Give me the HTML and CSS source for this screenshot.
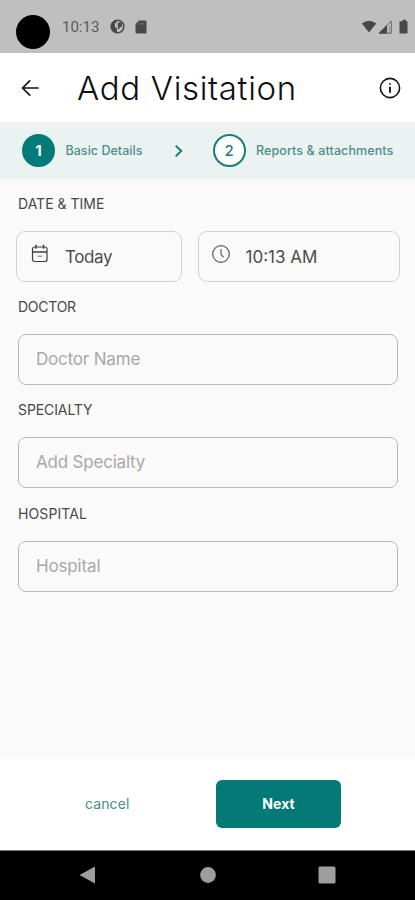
FILE: index.html
```html
<!DOCTYPE html>
<html lang="en">
<head>
<meta charset="utf-8">
<meta name="viewport" content="width=device-width, initial-scale=1">
<title>Add Visitation</title>
<link rel="stylesheet" href="styles.css">
</head>
<body>
<div class="screen">
  <div class="status">
    <span class="camera"></span>
    <span class="clock">10:13</span>
    <svg class="status-globe" width="15" height="15" viewBox="0 0 15 15"><circle cx="7.500" cy="7.500" r="6.300" fill="none" stroke="#484848" stroke-width="1.600"/><path d="M1 7.500A6.500 6.500 0 0 1 6.500 1v3H5v4l2 1.500V14A6.500 6.500 0 0 1 1 7.500zM7.800 3.500h4v4.500H9.500V10H7.800z" fill="#484848"/></svg>
    <svg class="status-card" width="12" height="14" viewBox="0 0 12 14"><path d="M4 .5h6.500q1 0 1 1v11q0 1-1 1h-9q-1 0-1-1V4z" fill="#484848"/><path d="M4 2.500v2.500M6.300 2.500v2.500M8.600 2.500v2.500" stroke="#777" stroke-width=".9"/></svg>
    <svg class="status-right" width="48" height="16" viewBox="0 0 48 16"><path d="M.8 4.500Q8 -1 15.300 4.500L8 13.600z" fill="#484848"/><path d="M18 14.200L30.300 2v12.200z" fill="none" stroke="#666" stroke-width="1"/><path d="M17.500 14.500l8.500-8.500v8.500z" fill="#484848"/><path d="M28.300 7v4.500M28.300 12.500v1.500" stroke="#777" stroke-width=".8"/><path d="M39.500 2.200h2V.8h3.500v1.400h1.500v12.300h-8V2.200z" fill="#484848"/></svg>
  </div>

  <header class="header">
    <svg class="back" width="20" height="20" viewBox="0 0 20 20" fill="none" stroke="#111" stroke-width="1.700" stroke-linecap="round" stroke-linejoin="round"><path d="M18 10H2.500M9.700 2.800L2.500 10l7.200 7.200"/></svg>
    <h1>Add Visitation</h1>
    <svg class="info" width="22" height="22" viewBox="0 0 22 22"><circle cx="11" cy="11" r="9.600" fill="none" stroke="#161616" stroke-width="1.600"/><path d="M11 9.700v6" stroke="#111" stroke-width="1.900"/><circle cx="11" cy="6.900" r="1" fill="#333"/></svg>
  </header>

  <nav class="steps">
    <span class="num num-active">1</span>
    <span class="step-label first">Basic Details</span>
    <svg class="chevron" width="10" height="14" viewBox="0 0 10 14" fill="none" stroke="#157f7b" stroke-width="1.900"><path d="M1.700 1.700L7.300 7l-5.600 5.300"/></svg>
    <span class="num">2</span>
    <span class="step-label second">Reports &amp; attachments</span>
  </nav>

  <main class="form">
    <div class="label label-date">DATE &amp; TIME</div>
    <div class="pickers">
      <button class="picker date">
        <svg width="18" height="20" viewBox="0 0 18 20" fill="none" stroke="#3c3c3c" stroke-width="1.200"><rect x="1.500" y="3" width="14.500" height="14.500" rx="2"/><path d="M1.500 8H16M5 .8v4M12.500 .8v4" stroke-width="1.400"/><path d="M6.500 12.200h4.500" stroke="#888"/></svg>
        <span class="today">Today</span>
      </button>
      <button class="picker time">
        <svg width="20" height="20" viewBox="0 0 20 20" fill="none" stroke="#5c5c5c" stroke-width="1.200"><circle cx="10" cy="10" r="8.300"/><path d="M10 5v5.300l2.500 3"/></svg>
        <span class="hour">10:13 AM</span>
      </button>
    </div>
    <div class="label label-doctor">DOCTOR</div>
    <div class="field"><span class="ph-doctor">Doctor Name</span></div>
    <div class="label label-spec">SPECIALTY</div>
    <div class="field"><span class="ph-spec">Add Specialty</span></div>
    <div class="label label-hosp">HOSPITAL</div>
    <div class="field"><span class="ph-hosp">Hospital</span></div>
  </main>

  <footer class="actions">
    <button class="cancel">cancel</button>
    <button class="next">Next</button>
  </footer>

  <div class="navbar">
    <svg width="18" height="20" viewBox="0 0 18 20"><path d="M.5 10L16 1.500v17z" fill="#9d9d9d"/></svg>
    <svg width="18" height="20" viewBox="0 0 18 20"><circle cx="9" cy="10" r="7.900" fill="#9d9d9d"/></svg>
    <svg width="18" height="20" viewBox="0 0 18 20"><rect x=".5" y="1.500" width="17" height="17" rx="1.500" fill="#9d9d9d"/></svg>
  </div>
</div>
</body>
</html>
```
FILE: styles.css
```css
* { box-sizing: border-box; }
body { margin: 0; font-family: Inter, "Liberation Sans", sans-serif; background: #fafafa; }
svg { display: block; flex: none; }
button { font: inherit; margin: 0; padding: 0; border: 0; background: none; text-align: left; }
span, h1, .label { white-space: nowrap; }

.screen { width: 415px; height: 900px; display: flex; flex-direction: column; overflow: hidden; }

.status { height: 53px; flex: none; background: #bfbfbf; display: flex; align-items: flex-start; padding-left: 16px; }
.camera { width: 34px; height: 34px; margin-top: 15px; border-radius: 50%; background: #000; flex: none; }
.clock { width: 49px; margin: 17px 0 0 12px; font-family: Roboto, sans-serif; font-size: 15px; line-height: 20px; color: #5a5a5a; }
.status-globe { margin-top: 19px; margin-left: -1px; }
.status-card { margin: 20px 0 0 10px; }
.status-right { margin: 19px 6px 0 auto; }

.header { height: 69px; flex: none; background: #fff; display: flex; align-items: center; padding: 0 14px 0 20px; }
h1 { margin: 0 auto 0 37px; font-size: 33px; font-weight: 300; line-height: 40px; letter-spacing: .67px; color: #101010; }

.steps { height: 57px; flex: none; background: #eaf2f2; display: flex; align-items: center; padding-left: 22px; color: #4b9088; }
.num { width: 33px; height: 33px; flex: none; border: 2px solid #157f7b; border-radius: 50%; background: #fff; color: #1c7d77; font-size: 15px; font-weight: 500; line-height: 29px; text-align: center; }
.num-active { background: #037c79; border-color: #037c79; color: #fff; font-weight: 700; }
.step-label { font-size: 12.500px; line-height: 20px; font-weight: 500; }
.first { width: 98px; margin-left: 10.500px; letter-spacing: .03px; }
.second { margin-left: 10.500px; letter-spacing: .1px; }
.chevron { margin: 0 29px 0 10px; }

.form { flex: 1; background: #fafafa; }
.label { height: 20px; margin-left: 18px; font-size: 14px; line-height: 20px; color: #484848; }
.label-date { margin-top: 15px; }
.pickers { display: grid; grid-template-columns: 166px 202px; gap: 15.500px; margin: 17px 0 0 16px; }
.picker { height: 51px; border: 1.500px solid #d2d2d2; border-radius: 9px; display: flex; align-items: center; font-size: 17px; color: #4c4c4c; }
.picker svg { margin-top: -5px; }
.date svg { margin-left: 14px; }
.time svg { margin-left: 12px; }
.today { margin-left: 16px; letter-spacing: -.4px; }
.hour { margin-left: 15px; }
.label-doctor { margin-top: 15px; letter-spacing: -.25px; }
.field { width: 380px; height: 51px; margin: 17px 0 0 18px; padding-left: 17px; border: 1.500px solid #b8b8b8; border-radius: 8px; font-size: 17px; line-height: 48px; color: #a8a8a8; }
.label-spec, .label-hosp { margin-top: 15px; }
.label-spec { letter-spacing: -.1px; }
.label-hosp { letter-spacing: .1px; margin-top: 15.500px; }
.ph-doctor { letter-spacing: -.18px; }
.ph-spec { letter-spacing: -.2px; }
.ph-hosp { letter-spacing: -.15px; }

.actions { height: 92px; flex: none; background: #fff; display: flex; align-items: center; }
.cancel { width: 131px; margin-left: 85px; padding-bottom: 2px; font-size: 14px; letter-spacing: .1px; color: #4b8d84; }
.next { width: 125px; height: 48px; padding-bottom: 2px; border-radius: 6px; background: #047a77; color: #fff; font-size: 14px; font-weight: 700; letter-spacing: .1px; text-align: center; }

.navbar { height: 50px; flex: none; background: #000; border-top: 1px solid #777; display: flex; justify-content: space-between; padding: 14px 79px 0; }
```
